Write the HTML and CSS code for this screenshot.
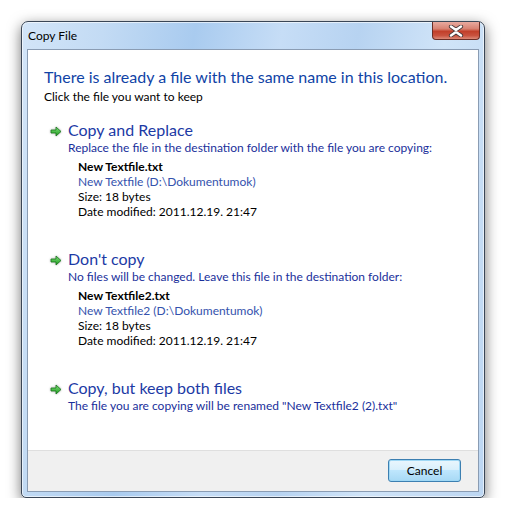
FILE: index.html
```html
<!DOCTYPE html>
<html lang="en">
<head>
    <meta charset="UTF-8">
    <title>Copy File</title>
    <link rel="stylesheet" href="styles.css">
</head>
<body>
    <div class="janela">
        <!-- Barra de titulo -->
        <div class="titulo">
            <span class="titulo-texto">Copy File</span>
            <button class="fechar" aria-label="Close">
                <svg width="16" height="12" viewBox="0 0 16 12">
                    <path d="M3 1.5 L8 5 L13 1.5 M3 10.5 L8 7 L13 10.5" stroke="#4b3b3b" stroke-width="4.2" fill="none" stroke-linecap="round"/>
                    <path d="M3 1.5 L8 5 L13 1.5 M3 10.5 L8 7 L13 10.5" stroke="#ffffff" stroke-width="2.4" fill="none" stroke-linecap="round"/>
                </svg>
            </button>
        </div>

        <div class="painel">
            <div class="conteudo">
                <h1 class="instrucao">There is already a file with the same name in this location.</h1>
                <p class="sub">Click the file you want to keep</p>

                <!-- Opcao 1 -->
                <div class="opcao">
                    <div class="opcao-titulo">
                        <svg class="seta" width="12" height="11" viewBox="0 0 12 11">
                            <defs>
                                <linearGradient id="g1" x1="0" y1="0" x2="0" y2="1">
                                    <stop offset="0" stop-color="#7fe07a"/>
                                    <stop offset="1" stop-color="#1e9a1e"/>
                                </linearGradient>
                            </defs>
                            <path d="M1 4 H6 V1 L11 5.5 L6 10 V7 H1 Z" fill="url(#g1)" stroke="#17761b" stroke-width="0.8" stroke-linejoin="round"/>
                        </svg>
                        <span>Copy and Replace</span>
                    </div>
                    <p class="nota">Replace the file in the destination folder with the file you are copying:</p>
                    <div class="arquivo">
                        <p class="nome">New Textfile.txt</p>
                        <p class="caminho">New Textfile (D:\Dokumentumok)</p>
                        <p>Size: 18 bytes</p>
                        <p>Date modified: 2011.12.19. 21:47</p>
                    </div>
                </div>

                <!-- Opcao 2 -->
                <div class="opcao">
                    <div class="opcao-titulo">
                        <svg class="seta" width="12" height="11" viewBox="0 0 12 11">
                            <path d="M1 4 H6 V1 L11 5.5 L6 10 V7 H1 Z" fill="url(#g1)" stroke="#17761b" stroke-width="0.8" stroke-linejoin="round"/>
                        </svg>
                        <span>Don't copy</span>
                    </div>
                    <p class="nota">No files will be changed. Leave this file in the destination folder:</p>
                    <div class="arquivo">
                        <p class="nome">New Textfile2.txt</p>
                        <p class="caminho">New Textfile2 (D:\Dokumentumok)</p>
                        <p>Size: 18 bytes</p>
                        <p>Date modified: 2011.12.19. 21:47</p>
                    </div>
                </div>

                <!-- Opcao 3 -->
                <div class="opcao">
                    <div class="opcao-titulo">
                        <svg class="seta" width="12" height="11" viewBox="0 0 12 11">
                            <path d="M1 4 H6 V1 L11 5.5 L6 10 V7 H1 Z" fill="url(#g1)" stroke="#17761b" stroke-width="0.8" stroke-linejoin="round"/>
                        </svg>
                        <span>Copy, but keep both files</span>
                    </div>
                    <p class="nota">The file you are copying will be renamed "New Textfile2 (2).txt"</p>
                </div>
            </div>

            <!-- Rodape com o botao -->
            <div class="rodape">
                <button class="cancelar">Cancel</button>
            </div>
        </div>
    </div>
</body>
</html>
```

FILE: styles.css
```css
/* Pagina */
body {
    margin: 0;
    background-color: #ffffff;
    font-family: Lato, "Liberation Sans", sans-serif;
}

/* Janela com vidro azul */
.janela {
    margin: 21px 0 0 21px;
    width: 464px;
    height: 477px;
    box-sizing: border-box;
    border: 1px solid #3a4656;
    border-radius: 7px 7px 5px 5px;
    background: linear-gradient(100deg, #d3e5f8 0%, #c3dbf4 15%, #a9cbef 32%, #c6ddf6 48%, #b7d3f1 62%, #d0e4f8 78%, #bcd6f2 100%);
    box-shadow: 0 4px 14px rgba(0, 0, 0, 0.55), inset 0 0 0 1px rgba(255, 255, 255, 0.6);
    padding: 0 5px 5px 5px;
    display: flex;
    flex-direction: column;
}

/* Barra de titulo */
.titulo {
    height: 27px;
    display: flex;
    justify-content: space-between;
    align-items: flex-start;
}

.titulo-texto {
    font-size: 12px;
    color: #000000;
    margin: 6px 0 0 1px;
    line-height: 15px;
}

.fechar {
    width: 48px;
    height: 18px;
    margin-right: -1px;
    padding: 0;
    border: 1px solid #6a2e26;
    border-top: none;
    border-radius: 0 0 4px 4px;
    background: linear-gradient(#e9aa9f 0%, #d88272 40%, #c23f2a 55%, #c9533f 80%, #dc8a78 100%);
    display: flex;
    justify-content: center;
    align-items: center;
}

/* Painel branco */
.painel {
    flex: 1;
    border: 1px solid #8a9cb3;
    background-color: #ffffff;
    display: flex;
    flex-direction: column;
}

.conteudo {
    flex: 1;
    padding: 16px 16px 0 16px;
}

.conteudo p {
    margin: 0;
}

.instrucao {
    margin: 0;
    font-size: 16px;
    font-weight: normal;
    line-height: 21px;
    color: #1043a6;
}

.sub {
    font-size: 12px;
    line-height: 15px;
    color: #000000;
    margin-top: 2px !important;
}

/* Opcoes (command links) */
.opcao {
    margin-top: 15px;
    margin-bottom: 29px;
}

.opcao-titulo {
    display: flex;
    align-items: center;
    margin-left: 6px;
    font-size: 16px;
    line-height: 21px;
    color: #1c3aa5;
}

.seta {
    margin: 3px 6px 0 0;
    filter: drop-shadow(0 0 1px rgba(0, 0, 0, 0.35));
}

.nota {
    margin-left: 24px !important;
    font-size: 12px;
    line-height: 15px;
    color: #1a2f9b;
}

.arquivo {
    margin: 4px 0 0 34px;
    font-size: 12px;
    line-height: 15px;
    color: #000000;
}

.nome {
    font-weight: bold;
}

.caminho {
    color: #3452ad;
}

/* Rodape */
.rodape {
    height: 40px;
    border-top: 1px solid #dfdfdf;
    background-color: #f0f0f0;
    display: flex;
    justify-content: flex-end;
    align-items: flex-start;
    padding-right: 17px;
}

.cancelar {
    margin-top: 8px;
    width: 73px;
    height: 23px;
    font-family: Lato, "Liberation Sans", sans-serif;
    font-size: 12px;
    color: #000000;
    border: 1px solid #3c7fb1;
    border-radius: 3px;
    background: linear-gradient(#eaf6fd 0%, #d9f0fc 45%, #bee6fd 50%, #a7d9f5 100%);
    box-shadow: inset 0 0 0 1px #9fd8f5;
    padding: 0;
}
```
